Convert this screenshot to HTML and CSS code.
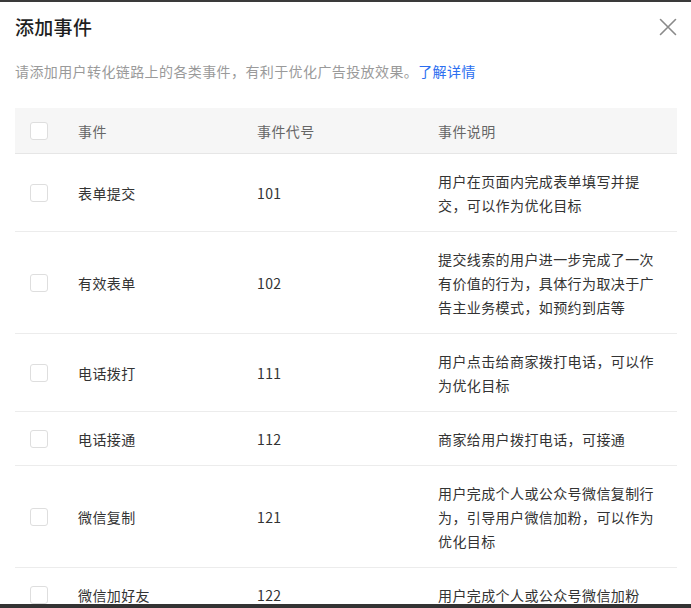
FILE: index.html
```html
<!DOCTYPE html>
<html lang="zh-CN">
<head>
<meta charset="utf-8">
<link rel="stylesheet" href="styles.css">
</head>
<body>
<div class="frame">
  <div class="bar-top"></div>
  <div class="modal">
    <div class="modal-head">
      <h1 class="title">添加事件</h1>
      <button class="close" aria-label="关闭">
        <svg width="18" height="18" viewBox="0 0 18 18"><path d="M1.5 1.5 L16.5 16.5 M16.5 1.5 L1.5 16.5" stroke="#8a8a8a" stroke-width="1.6" fill="none" stroke-linecap="round"/></svg>
      </button>
    </div>
    <p class="intro">请添加用户转化链路上的各类事件，有利于优化广告投放效果。<a class="link" href="#">了解详情</a></p>
    <table class="events">
      <colgroup>
        <col class="c-check"><col class="c-name"><col class="c-code"><col class="c-desc">
      </colgroup>
      <thead>
        <tr><th><span class="box"></span></th><th>事件</th><th>事件代号</th><th>事件说明</th></tr>
      </thead>
      <tbody>
        <tr><td><span class="box"></span></td><td>表单提交</td><td>101</td><td class="desc">用户在页面内完成表单填写并提交，可以作为优化目标</td></tr>
        <tr><td><span class="box"></span></td><td>有效表单</td><td>102</td><td class="desc">提交线索的用户进一步完成了一次有价值的行为，具体行为取决于广告主业务模式，如预约到店等</td></tr>
        <tr><td><span class="box"></span></td><td>电话拨打</td><td>111</td><td class="desc">用户点击给商家拨打电话，可以作为优化目标</td></tr>
        <tr><td><span class="box"></span></td><td>电话接通</td><td>112</td><td class="desc">商家给用户拨打电话，可接通</td></tr>
        <tr><td><span class="box"></span></td><td>微信复制</td><td>121</td><td class="desc">用户完成个人或公众号微信复制行为，引导用户微信加粉，可以作为优化目标</td></tr>
        <tr><td><span class="box"></span></td><td>微信加好友</td><td>122</td><td class="desc">用户完成个人或公众号微信加粉</td></tr>
      </tbody>
    </table>
  </div>
  <div class="bar-bottom"></div>
</div>
</body>
</html>
```
FILE: styles.css
```css
html, body {
  margin: 0;
  padding: 0;
  height: 100%;
  background: #ffffff;
}
body {
  font-family: "Noto Sans CJK SC", "Noto Sans", "Liberation Sans", sans-serif;
  color: #333333;
  overflow: hidden;
}
.frame {
  height: 608px;
  display: flex;
  flex-direction: column;
}
.bar-top {
  height: 2px;
  background: #3a3a3a;
  flex: none;
}
.bar-bottom {
  height: 4px;
  background: #333333;
  flex: none;
}
.modal {
  flex: 1;
  overflow: hidden;
  padding: 0 14px 0 15px;
  background: #ffffff;
}
.modal-head {
  display: flex;
  align-items: center;
  justify-content: space-between;
  height: 50px;
}
.title {
  margin: 0;
  font-size: 19px;
  font-weight: 500;
  letter-spacing: 0.3px;
  color: #1f1f1f;
  line-height: 26px;
}
.close {
  border: 0;
  background: none;
  padding: 0;
  width: 18px;
  height: 18px;
  display: flex;
  cursor: pointer;
}
.intro {
  margin: 7px 0 0;
  font-size: 14px;
  letter-spacing: 0.4px;
  line-height: 24px;
  color: #9a9a9a;
}
.link {
  color: #2b6ef0;
  text-decoration: none;
}
.events {
  margin-top: 25px;
  width: 662px;
  border-collapse: collapse;
  table-layout: fixed;
  font-size: 14px;
  letter-spacing: 0.4px;
}
.c-check { width: 48px; }
.c-name { width: 179px; }
.c-code { width: 181px; }
.c-desc { width: 254px; }
.events th {
  background: #f6f6f6;
  color: #666666;
  font-weight: 400;
  text-align: left;
  height: 45px;
  padding: 0 0 0 15px;
  border-bottom: 1px solid #e6e6e6;
  line-height: 24px;
}
.events td {
  padding: 14.5px 0 14.5px 15px;
  line-height: 24px;
  vertical-align: middle;
  border-bottom: 1px solid #ececec;
  color: #333333;
}
.events td.desc {
  padding-right: 19px;
}
.box {
  display: block;
  width: 16px;
  height: 16px;
  border: 1px solid #dedede;
  border-radius: 3px;
  background: #ffffff;
}
```
